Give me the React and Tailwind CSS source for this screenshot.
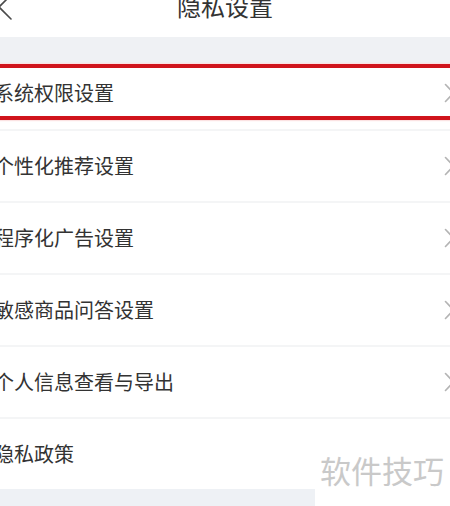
import React from 'react';

const ROWS = [
  { label: '个性化推荐设置', arrow: true },
  { label: '程序化广告设置', arrow: true },
  { label: '敏感商品问答设置', arrow: true },
  { label: '个人信息查看与导出', arrow: true },
];

const Chevron = () => (
  <svg width="12" height="20" viewBox="0 0 12 20" className="shrink-0 mr-[-6px]" fill="none">
    <polyline points="1.5,1.5 9.5,10 1.5,18.5" stroke="#b4b4b4" strokeWidth="1.6" strokeLinecap="round" strokeLinejoin="round" />
  </svg>
);

const Row = ({ label, arrow, className = '' }) => (
  <div className={`flex items-center justify-between bg-white pr-0 ${className}`}>
    <span className="ml-[-6px] text-[20px] leading-[24px] text-[#333333] whitespace-nowrap">{label}</span>
    {arrow && <Chevron />}
  </div>
);

const Divider = () => <div className="h-[2px] bg-[#f4f5f6]" />;

export default function App() {
  return (
    <div
      className="relative w-[450px] h-[506px] overflow-hidden bg-white"
      style={{ fontFamily: '"Noto Sans CJK SC", "Noto Sans", sans-serif' }}
    >
      <header className="relative h-[37px] bg-white flex justify-center">
        <svg width="16" height="30" viewBox="0 0 16 30" className="absolute left-[-3px] top-[-7px]" fill="none">
          <polyline points="14,2 2,14 14,26" stroke="#4a4a4a" strokeWidth="1.6" strokeLinecap="round" strokeLinejoin="round" />
        </svg>
        <h1 className="mt-[-6px] text-[24px] leading-[24px] text-[#333333] font-normal">隐私设置</h1>
      </header>

      <div className="h-[26px] bg-[#eff1f4]" />

      <div className="relative">
        <Row label="系统权限设置" arrow className="h-[66px] pb-[6px]" />
        <div className="absolute left-[-10px] right-[-10px] top-[1px] h-[56px] border-[4px] border-[#d0141c] shadow-[0_0_2px_#f3a7a9]" />
      </div>
      <Divider />

      {ROWS.map((r) => (
        <React.Fragment key={r.label}>
          <Row label={r.label} arrow={r.arrow} className="h-[70px]" />
          <Divider />
        </React.Fragment>
      ))}

      <Row label="隐私政策" className="h-[70px]" />

      <div className="flex h-[17px]">
        <div className="w-[315px] bg-[#eef1f5]" />
        <div className="flex-1 bg-white" />
      </div>

      <div className="absolute right-0 top-[444px] w-[135px] h-[62px] bg-white flex items-start justify-start pl-[5px] pt-[8px]">
        <span className="text-[31px] leading-[36px] text-[#c9c9c9] whitespace-nowrap">软件技巧</span>
      </div>
    </div>
  );
}
